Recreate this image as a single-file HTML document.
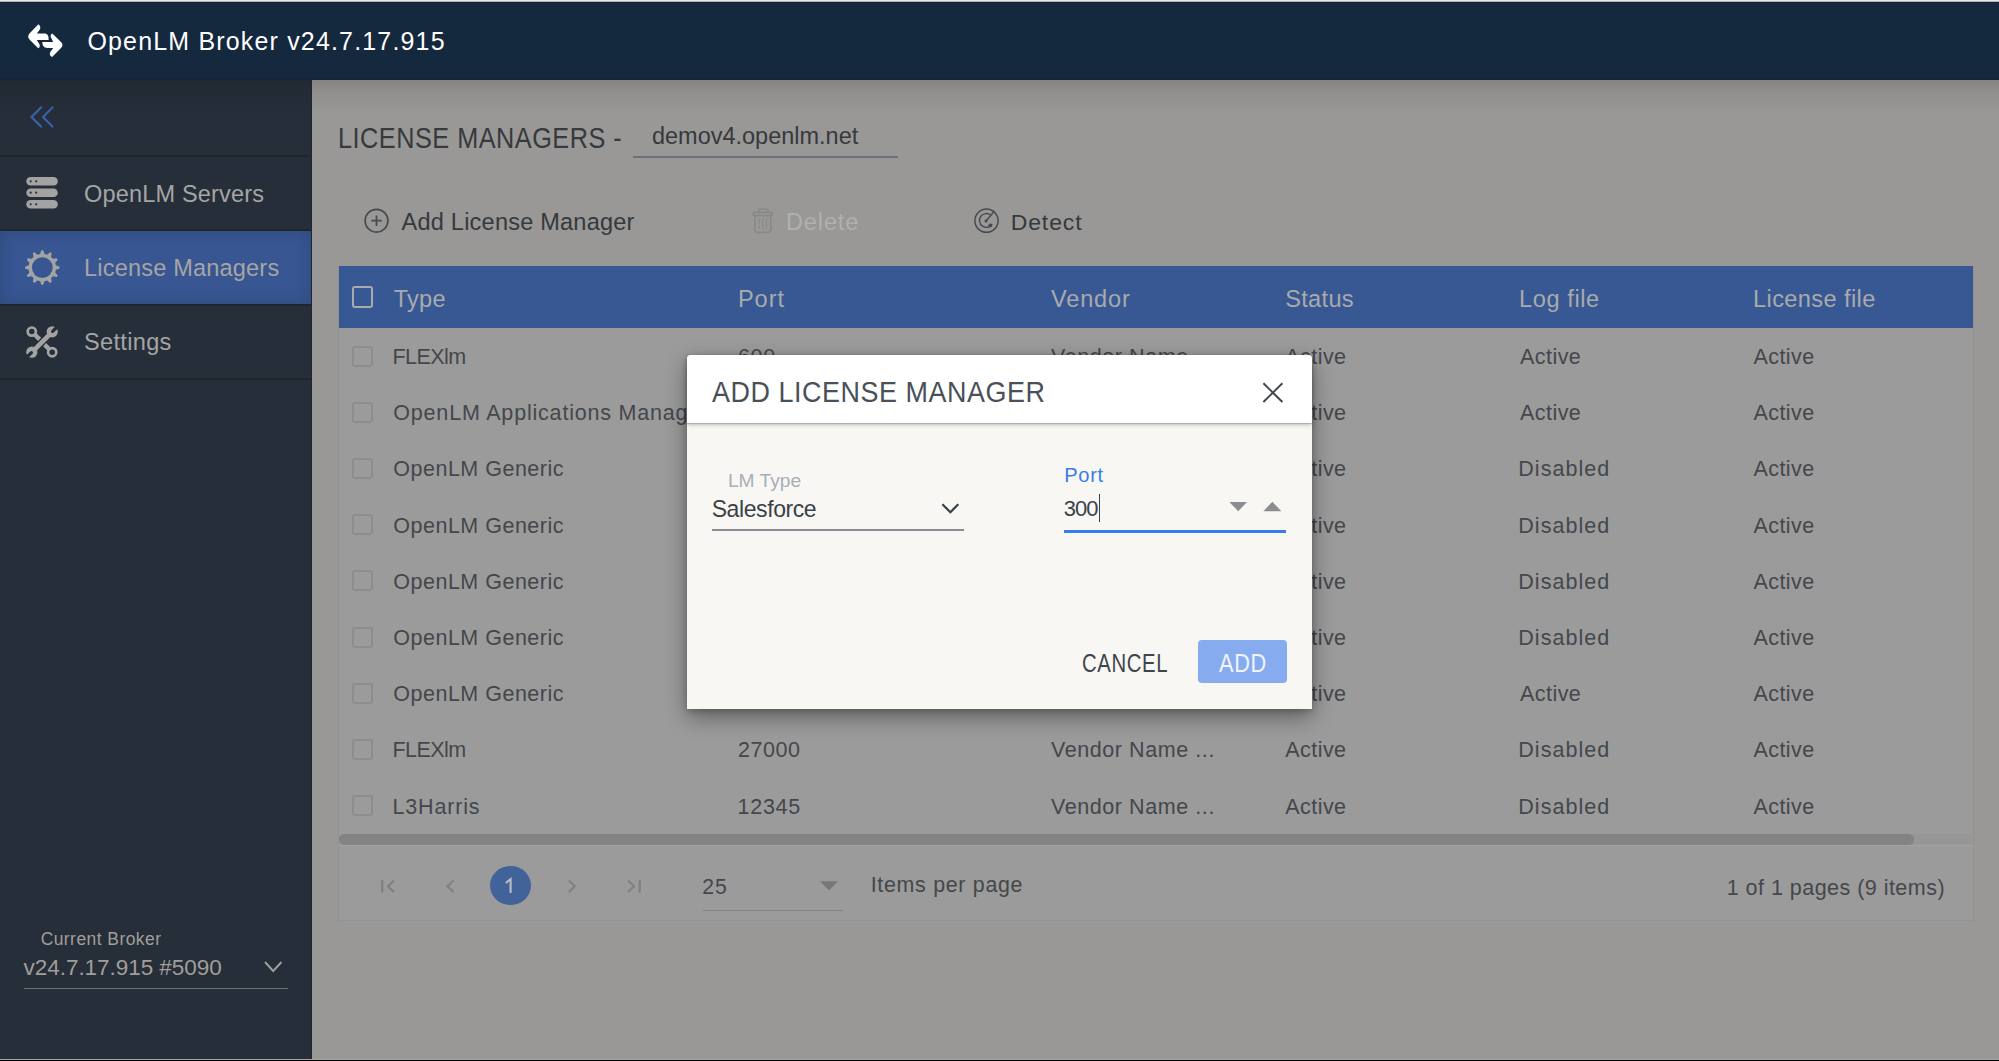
<!DOCTYPE html>
<html><head><meta charset="utf-8">
<style>
html,body{margin:0;padding:0;}
body{width:1999px;height:1061px;position:relative;overflow:hidden;background:#999896;font-family:"Liberation Sans", sans-serif;}
.t{position:absolute;white-space:nowrap;line-height:1;}
.a{position:absolute;}
svg{position:absolute;overflow:visible;}
</style></head><body>
<div class="a" style="left:0px;top:80px;width:312px;height:981px;background:#252e39;"></div>
<div class="a" style="left:0px;top:80px;width:1999px;height:36px;background:linear-gradient(rgba(0,0,0,0.13),rgba(0,0,0,0.05) 40%,rgba(0,0,0,0));"></div>
<div class="a" style="left:0px;top:0px;width:1999px;height:80px;background:#14283e;"></div>
<div class="a" style="left:0px;top:78px;width:1999px;height:2px;background:#12233a;"></div>
<div class="a" style="left:0px;top:0px;width:1999px;height:1px;background:#e7e7e5;"></div>
<div class="a" style="left:0px;top:1px;width:1999px;height:1px;background:#b4b7ba;"></div>
<div class="a" style="left:0px;top:2px;width:1999px;height:1px;background:#0f2136;"></div>
<div class="a" style="left:0px;top:155px;width:311px;height:2px;background:#20262d;"></div>
<div class="a" style="left:0px;top:229px;width:311px;height:2px;background:#20262d;"></div>
<div class="a" style="left:0px;top:231px;width:311px;height:73px;background:#375692;box-shadow:inset 0 0 16px rgba(0,0,0,0.16);"></div>
<div class="a" style="left:0px;top:304px;width:311px;height:2px;background:#20262d;"></div>
<div class="a" style="left:0px;top:378px;width:311px;height:2px;background:#20262d;"></div>
<div class="a" style="left:311px;top:80px;width:1px;height:981px;background:#1f262e;"></div>
<div class="a" style="left:0px;top:1059px;width:1999px;height:1px;background:#a3a29f;"></div>
<div class="a" style="left:0px;top:1060px;width:1999px;height:1px;background:#000;"></div>
<div class="t" style="left:87.45px;top:28.80px;font-size:24.97px;letter-spacing:1.182px;color:#ffffff;">OpenLM Broker v24.7.17.915</div>
<div class="t" style="left:84.00px;top:182.70px;font-size:23.56px;letter-spacing:0.154px;color:#a5a5a5;">OpenLM Servers</div>
<div class="t" style="left:84.00px;top:257.20px;font-size:23.56px;letter-spacing:0.183px;color:#a5a5a5;">License Managers</div>
<div class="t" style="left:84.00px;top:331.40px;font-size:23.56px;letter-spacing:0.321px;color:#a5a5a5;">Settings</div>
<div class="t" style="left:40.65px;top:931.00px;font-size:17.45px;letter-spacing:0.458px;color:#a29e98;">Current Broker</div>
<div class="t" style="left:23.60px;top:956.90px;font-size:22.51px;letter-spacing:-0.050px;color:#a29e99;">v24.7.17.915 #5090</div>
<div class="a" style="left:23.6px;top:987.6px;width:264px;height:1.6px;background:#72716f;"></div>
<div class="t" style="left:337.93px;top:124.00px;font-size:28.82px;letter-spacing:0.576px;color:#36393d;transform:scaleX(0.8766);transform-origin:0 0;">LICENSE MANAGERS -</div>
<div class="t" style="left:651.55px;top:124.40px;font-size:24.83px;letter-spacing:0.000px;color:#36393d;transform:scaleX(0.9457);transform-origin:0 0;">demov4.openlm.net</div>
<div class="a" style="left:633.3px;top:156px;width:264.5px;height:1.8px;background:#6c7077;"></div>
<div class="t" style="left:401.60px;top:210.60px;font-size:23.56px;letter-spacing:0.208px;color:#36393d;">Add License Manager</div>
<div class="t" style="left:786.00px;top:210.60px;font-size:23.56px;letter-spacing:0.850px;color:#b0b0b0;">Delete</div>
<div class="t" style="left:1010.75px;top:210.80px;font-size:22.98px;letter-spacing:0.880px;color:#36393d;">Detect</div>
<div class="a" style="left:338px;top:266px;width:1636px;height:655px;background:#9b9b9b;border-left:1px solid #929292;border-right:1px solid #929292;border-bottom:1px solid #929292;box-sizing:border-box;"></div>
<div class="a" style="left:339px;top:266px;width:1634px;height:62px;background:#385893;"></div>
<div class="t" style="left:393.80px;top:287.60px;font-size:23.56px;letter-spacing:0.233px;color:#a9aaab;">Type</div>
<div class="t" style="left:737.90px;top:287.60px;font-size:23.56px;letter-spacing:0.967px;color:#a9aaab;">Port</div>
<div class="t" style="left:1051.00px;top:287.60px;font-size:23.56px;letter-spacing:0.830px;color:#a9aaab;">Vendor</div>
<div class="t" style="left:1285.20px;top:287.60px;font-size:23.56px;letter-spacing:0.330px;color:#a9aaab;">Status</div>
<div class="t" style="left:1519.00px;top:287.60px;font-size:23.56px;letter-spacing:0.607px;color:#a9aaab;">Log file</div>
<div class="t" style="left:1753.00px;top:287.60px;font-size:23.56px;letter-spacing:0.409px;color:#a9aaab;">License file</div>
<div class="a" style="left:351.5px;top:286.2px;width:21.8px;height:21.5px;background:transparent;border:2px solid #a9aaab;border-radius:3px;box-sizing:border-box;"></div>
<div class="a" style="left:351.5px;top:345.5px;width:21.8px;height:21px;background:transparent;border:2px solid #8d8d8d;border-radius:3px;box-sizing:border-box;"></div>
<div class="t" style="left:392.55px;top:347.00px;font-size:21.53px;letter-spacing:-0.570px;color:#44474b;">FLEXlm</div>
<div class="t" style="left:738.00px;top:347.00px;font-size:21.53px;letter-spacing:0.625px;color:#44474b;">600</div>
<div class="t" style="left:1051.00px;top:347.00px;font-size:21.53px;letter-spacing:0.564px;color:#44474b;">Vendor Name ...</div>
<div class="t" style="left:1285.30px;top:347.00px;font-size:21.53px;letter-spacing:0.440px;color:#44474b;">Active</div>
<div class="t" style="left:1520.00px;top:347.00px;font-size:21.53px;letter-spacing:0.440px;color:#44474b;">Active</div>
<div class="t" style="left:1753.40px;top:347.00px;font-size:21.53px;letter-spacing:0.440px;color:#44474b;">Active</div>
<div class="a" style="left:351.5px;top:401.7px;width:21.8px;height:21px;background:transparent;border:2px solid #8d8d8d;border-radius:3px;box-sizing:border-box;"></div>
<div class="t" style="left:393.30px;top:403.20px;font-size:21.53px;letter-spacing:0.800px;color:#44474b;">OpenLM Applications Manager</div>
<div class="t" style="left:1285.30px;top:403.20px;font-size:21.53px;letter-spacing:0.440px;color:#44474b;">Active</div>
<div class="t" style="left:1520.00px;top:403.20px;font-size:21.53px;letter-spacing:0.440px;color:#44474b;">Active</div>
<div class="t" style="left:1753.40px;top:403.20px;font-size:21.53px;letter-spacing:0.440px;color:#44474b;">Active</div>
<div class="a" style="left:351.5px;top:457.9px;width:21.8px;height:21px;background:transparent;border:2px solid #8d8d8d;border-radius:3px;box-sizing:border-box;"></div>
<div class="t" style="left:393.30px;top:459.40px;font-size:21.53px;letter-spacing:0.488px;color:#44474b;">OpenLM Generic</div>
<div class="t" style="left:1285.30px;top:459.40px;font-size:21.53px;letter-spacing:0.440px;color:#44474b;">Active</div>
<div class="t" style="left:1518.25px;top:459.40px;font-size:21.53px;letter-spacing:1.029px;color:#44474b;">Disabled</div>
<div class="t" style="left:1753.40px;top:459.40px;font-size:21.53px;letter-spacing:0.440px;color:#44474b;">Active</div>
<div class="a" style="left:351.5px;top:514.1px;width:21.8px;height:21px;background:transparent;border:2px solid #8d8d8d;border-radius:3px;box-sizing:border-box;"></div>
<div class="t" style="left:393.30px;top:515.60px;font-size:21.53px;letter-spacing:0.488px;color:#44474b;">OpenLM Generic</div>
<div class="t" style="left:1285.30px;top:515.60px;font-size:21.53px;letter-spacing:0.440px;color:#44474b;">Active</div>
<div class="t" style="left:1518.25px;top:515.60px;font-size:21.53px;letter-spacing:1.029px;color:#44474b;">Disabled</div>
<div class="t" style="left:1753.40px;top:515.60px;font-size:21.53px;letter-spacing:0.440px;color:#44474b;">Active</div>
<div class="a" style="left:351.5px;top:570.3px;width:21.8px;height:21px;background:transparent;border:2px solid #8d8d8d;border-radius:3px;box-sizing:border-box;"></div>
<div class="t" style="left:393.30px;top:571.80px;font-size:21.53px;letter-spacing:0.488px;color:#44474b;">OpenLM Generic</div>
<div class="t" style="left:1285.30px;top:571.80px;font-size:21.53px;letter-spacing:0.440px;color:#44474b;">Active</div>
<div class="t" style="left:1518.25px;top:571.80px;font-size:21.53px;letter-spacing:1.029px;color:#44474b;">Disabled</div>
<div class="t" style="left:1753.40px;top:571.80px;font-size:21.53px;letter-spacing:0.440px;color:#44474b;">Active</div>
<div class="a" style="left:351.5px;top:626.5px;width:21.8px;height:21px;background:transparent;border:2px solid #8d8d8d;border-radius:3px;box-sizing:border-box;"></div>
<div class="t" style="left:393.30px;top:628.00px;font-size:21.53px;letter-spacing:0.488px;color:#44474b;">OpenLM Generic</div>
<div class="t" style="left:1285.30px;top:628.00px;font-size:21.53px;letter-spacing:0.440px;color:#44474b;">Active</div>
<div class="t" style="left:1518.25px;top:628.00px;font-size:21.53px;letter-spacing:1.029px;color:#44474b;">Disabled</div>
<div class="t" style="left:1753.40px;top:628.00px;font-size:21.53px;letter-spacing:0.440px;color:#44474b;">Active</div>
<div class="a" style="left:351.5px;top:682.7px;width:21.8px;height:21px;background:transparent;border:2px solid #8d8d8d;border-radius:3px;box-sizing:border-box;"></div>
<div class="t" style="left:393.30px;top:684.20px;font-size:21.53px;letter-spacing:0.488px;color:#44474b;">OpenLM Generic</div>
<div class="t" style="left:1285.30px;top:684.20px;font-size:21.53px;letter-spacing:0.440px;color:#44474b;">Active</div>
<div class="t" style="left:1520.00px;top:684.20px;font-size:21.53px;letter-spacing:0.440px;color:#44474b;">Active</div>
<div class="t" style="left:1753.40px;top:684.20px;font-size:21.53px;letter-spacing:0.440px;color:#44474b;">Active</div>
<div class="a" style="left:351.5px;top:738.9px;width:21.8px;height:21px;background:transparent;border:2px solid #8d8d8d;border-radius:3px;box-sizing:border-box;"></div>
<div class="t" style="left:392.55px;top:740.40px;font-size:21.53px;letter-spacing:-0.570px;color:#44474b;">FLEXlm</div>
<div class="t" style="left:738.00px;top:740.40px;font-size:21.53px;letter-spacing:0.550px;color:#44474b;">27000</div>
<div class="t" style="left:1051.00px;top:740.40px;font-size:21.53px;letter-spacing:0.564px;color:#44474b;">Vendor Name ...</div>
<div class="t" style="left:1285.30px;top:740.40px;font-size:21.53px;letter-spacing:0.440px;color:#44474b;">Active</div>
<div class="t" style="left:1518.25px;top:740.40px;font-size:21.53px;letter-spacing:1.029px;color:#44474b;">Disabled</div>
<div class="t" style="left:1753.40px;top:740.40px;font-size:21.53px;letter-spacing:0.440px;color:#44474b;">Active</div>
<div class="a" style="left:351.5px;top:795.1px;width:21.8px;height:21px;background:transparent;border:2px solid #8d8d8d;border-radius:3px;box-sizing:border-box;"></div>
<div class="t" style="left:392.55px;top:796.60px;font-size:21.53px;letter-spacing:0.807px;color:#44474b;">L3Harris</div>
<div class="t" style="left:737.50px;top:796.60px;font-size:21.53px;letter-spacing:0.738px;color:#44474b;">12345</div>
<div class="t" style="left:1051.00px;top:796.60px;font-size:21.53px;letter-spacing:0.564px;color:#44474b;">Vendor Name ...</div>
<div class="t" style="left:1285.30px;top:796.60px;font-size:21.53px;letter-spacing:0.440px;color:#44474b;">Active</div>
<div class="t" style="left:1518.25px;top:796.60px;font-size:21.53px;letter-spacing:1.029px;color:#44474b;">Disabled</div>
<div class="t" style="left:1753.40px;top:796.60px;font-size:21.53px;letter-spacing:0.440px;color:#44474b;">Active</div>
<div class="a" style="left:339px;top:834px;width:1634px;height:11px;background:#969696;border-radius:5.5px;"></div>
<div class="a" style="left:339px;top:845px;width:1634px;height:1px;background:#a3a3a3;"></div>
<div class="a" style="left:339.2px;top:834.2px;width:1575px;height:11px;background:#838383;border-radius:5.5px;"></div>
<div class="a" style="left:490.2px;top:865.6px;width:40.8px;height:39.6px;background:#42639a;border-radius:50%;"></div>
<svg style="left:0;top:0;" width="1999" height="1061" viewBox="0 0 1999 1061"><path d="M510.6,893 V879.2 L505.8,883" fill="none" stroke="#b9bdc4" stroke-width="2.1" stroke-linejoin="miter"/></svg>
<div class="t" style="left:702.20px;top:876.30px;font-size:21.22px;letter-spacing:1.050px;color:#44474b;">25</div>
<div class="a" style="left:703px;top:909.6px;width:140px;height:1.6px;background:#838383;"></div>
<div class="t" style="left:870.70px;top:874.90px;font-size:21.38px;letter-spacing:0.708px;color:#44474b;">Items per page</div>
<div class="t" style="left:1726.70px;top:877.80px;font-size:21.53px;letter-spacing:0.467px;color:#44474b;">1 of 1 pages (9 items)</div>
<svg style="left:0;top:0;" width="1999" height="1061" viewBox="0 0 1999 1061"><g fill="#ffffff" transform="translate(20,18)"><path d="M18.4,6.2 C20.5,7.5 21,10 19.5,12 L16.8,15.4 L24.5,15.4 C27.5,15.4 29,18 28.6,22 L16.8,22 L19,25.5 C20.3,27.8 20,29.5 18.2,30.3 L9.5,21.5 C7.8,19.7 7.8,17.6 9.5,15.6 Z"/><path d="M32.3,15.5 C30.5,16.3 30,18.2 31.4,20.2 L33.2,24 L22.4,24 C22.2,27.8 24,29.9 27.3,29.9 L33.2,29.9 L30.6,33.5 C29.2,35.6 29.6,38 32.1,39 L41,30 C43,28 43,26 41,24 Z"/></g></svg>
<svg style="left:0;top:0;" width="1999" height="1061" viewBox="0 0 1999 1061"><g fill="none" stroke="#3960a8" stroke-width="2.3" stroke-linecap="round" stroke-linejoin="round" transform="translate(28,104)"><path d="M13,3.5 L3.5,13 L13,22.5"/><path d="M24.5,3.5 L15,13 L24.5,22.5"/></g></svg>
<svg style="left:0;top:0;" width="1999" height="1061" viewBox="0 0 1999 1061"><rect x="26.3" y="177" width="31.5" height="8.6" rx="4.3" fill="#a3a3a3"/><circle cx="30.7" cy="181.3" r="1.1" fill="#2a313b"/><circle cx="36.2" cy="181.3" r="1.1" fill="#2a313b"/><rect x="26.3" y="188.4" width="31.5" height="8.6" rx="4.3" fill="#a3a3a3"/><circle cx="30.7" cy="192.70000000000002" r="1.1" fill="#2a313b"/><circle cx="36.2" cy="192.70000000000002" r="1.1" fill="#2a313b"/><rect x="26.3" y="200" width="31.5" height="8.6" rx="4.3" fill="#a3a3a3"/><circle cx="30.7" cy="204.3" r="1.1" fill="#2a313b"/><circle cx="36.2" cy="204.3" r="1.1" fill="#2a313b"/></svg>
<svg style="left:0;top:0;" width="1999" height="1061" viewBox="0 0 1999 1061"><path d="M40.07,253.98 L41.35,250.33 L43.25,250.33 L44.53,253.98 L47.18,254.69 L50.11,252.16 L51.76,253.12 L51.04,256.92 L52.98,258.86 L56.78,258.14 L57.74,259.79 L55.21,262.72 L55.92,265.37 L59.57,266.65 L59.57,268.55 L55.92,269.83 L55.21,272.48 L57.74,275.41 L56.78,277.06 L52.98,276.34 L51.04,278.28 L51.76,282.08 L50.11,283.04 L47.18,280.51 L44.53,281.22 L43.25,284.87 L41.35,284.87 L40.07,281.22 L37.42,280.51 L34.49,283.04 L32.84,282.08 L33.56,278.28 L31.62,276.34 L27.82,277.06 L26.86,275.41 L29.39,272.48 L28.68,269.83 L25.03,268.55 L25.03,266.65 L28.68,265.37 L29.39,262.72 L26.86,259.79 L27.82,258.14 L31.62,258.86 L33.56,256.92 L32.84,253.12 L34.49,252.16 L37.42,254.69 Z M52.70,267.60 A10.4,10.4 0 1,0 31.90,267.60 A10.4,10.4 0 1,0 52.70,267.60 Z" fill="#a3a3a3" fill-rule="evenodd"/></svg>
<svg style="left:0;top:0;" width="1999" height="1061" viewBox="0 0 1999 1061"><g stroke="#a3a3a3" fill="none"><path d="M34.2,334 L39.6,339.4" stroke-width="4.4"/><path d="M44.6,344.6 L50,350" stroke-width="4.4"/><circle cx="31.8" cy="331.6" r="4.1" stroke-width="2.7"/><circle cx="52.2" cy="352.2" r="4.1" stroke-width="2.7"/><path d="M34,350.2 L50,334.2" stroke-width="4.6"/></g><circle cx="52.2" cy="331.8" r="5.6" fill="#a3a3a3"/><circle cx="31.8" cy="352.2" r="5.6" fill="#a3a3a3"/><path d="M52.6,331.4 L58,326 M31.4,352.6 L26,358" stroke="#252e39" stroke-width="3.2" stroke-linecap="round"/></svg>
<svg style="left:0;top:0;" width="1999" height="1061" viewBox="0 0 1999 1061"><g fill="none" stroke="#464a4f" stroke-width="1.7"><circle cx="376.5" cy="220.7" r="11.4"/><path d="M371.2,220.7 H381.8 M376.5,215.4 V226"/></g></svg>
<svg style="left:0;top:0;" width="1999" height="1061" viewBox="0 0 1999 1061"><g fill="none" stroke="#878787" stroke-width="1.6" stroke-linejoin="round"><path d="M758.8,212.4 V210.6 Q758.8,209 760.4,209 H766 Q767.6,209 767.9,210.6 L768.3,212.4"/><rect x="753.2" y="212.4" width="19" height="3.2" rx="1.6"/><path d="M754.8,215.6 V229.5 Q754.8,232.4 757.7,232.4 H767.9 Q770.8,232.4 770.8,229.5 V215.6"/><path d="M759.2,218.5 V229 M762.8,218.5 V229 M766.4,218.5 V229" stroke-width="1"/></g></svg>
<svg style="left:0;top:0;" width="1999" height="1061" viewBox="0 0 1999 1061"><g fill="none" stroke="#464a4f"><circle cx="986.5" cy="220.7" r="11.6" stroke-width="1.5"/><path d="M990.6,215 A6.9,6.9 0 1,0 992.2,224.2" stroke-width="1.4"/><path d="M986,221 L994.5,211" stroke-width="1.4"/></g><circle cx="986" cy="221" r="1.5" fill="#464a4f"/><circle cx="990.3" cy="225.4" r="1.9" fill="#464a4f"/></svg>
<svg style="left:0;top:0;" width="1999" height="1061" viewBox="0 0 1999 1061"><g fill="none" stroke="#7f8183" stroke-width="2.2"><path d="M382.2,880 V892.6"/><path d="M394,880.5 L388,886.3 L394,892.1"/><path d="M453.5,880.5 L447.5,886.3 L453.5,892.1"/><path d="M568.8,880.5 L574.8,886.3 L568.8,892.1"/><path d="M628,880.5 L634,886.3 L628,892.1"/><path d="M639.7,880 V892.6"/></g><path d="M820,881.2 L837.9,881.2 L829,890.5 Z" fill="#777777"/></svg>
<svg style="left:0;top:0;" width="1999" height="1061" viewBox="0 0 1999 1061"><path d="M265,962 L273.2,971 L281.5,962" fill="none" stroke="#a29e98" stroke-width="1.9"/></svg>
<div class="a" style="left:687px;top:355px;width:625px;height:354px;background:#f8f7f4;border-radius:4px 4px 0 0;box-shadow:0 8px 22px rgba(0,0,0,0.38),0 2px 6px rgba(0,0,0,0.2);"></div>
<div class="a" style="left:687px;top:355px;width:625px;height:67.5px;background:#ffffff;border-radius:4px 4px 0 0;box-shadow:0 2px 4px rgba(0,0,0,0.22),0 1px 1px rgba(0,0,0,0.18);"></div>
<div class="t" style="left:712.00px;top:376.60px;font-size:29.53px;letter-spacing:0.591px;color:#4a5058;transform:scaleX(0.9123);transform-origin:0 0;">ADD LICENSE MANAGER</div>
<div class="t" style="left:727.90px;top:470.80px;font-size:19.20px;letter-spacing:0.008px;color:#a9aeb6;">LM Type</div>
<div class="t" style="left:711.70px;top:497.70px;font-size:23.03px;letter-spacing:-0.417px;color:#3c4148;">Salesforce</div>
<div class="a" style="left:712px;top:529px;width:252px;height:1.5px;background:#8b8d91;"></div>
<div class="t" style="left:1064.20px;top:464.80px;font-size:20.07px;letter-spacing:0.717px;color:#3a7ce8;">Port</div>
<div class="t" style="left:1063.75px;top:498.00px;font-size:21.94px;letter-spacing:-0.925px;color:#3c4148;">300</div>
<div class="a" style="left:1098.5px;top:494.3px;width:1.6px;height:27.6px;background:#3c4148;"></div>
<div class="a" style="left:1064px;top:530px;width:222.3px;height:3.2px;background:#3a7ce8;"></div>
<div class="t" style="left:1081.98px;top:651.40px;font-size:24.95px;letter-spacing:0.748px;color:#3f454c;transform:scaleX(0.8156);transform-origin:0 0;">CANCEL</div>
<div class="a" style="left:1198px;top:639.5px;width:88.5px;height:43.5px;background:#86acef;border-radius:4px;"></div>
<div class="t" style="left:1219.00px;top:651.40px;font-size:25.31px;letter-spacing:0.759px;color:#f0f4fb;transform:scaleX(0.8595);transform-origin:0 0;">ADD</div>
<svg style="left:0;top:0;" width="1999" height="1061" viewBox="0 0 1999 1061"><path d="M1263.4,383.3 L1282.4,402 M1282.4,383.3 L1263.4,402" fill="none" stroke="#3e444c" stroke-width="1.9"/><path d="M942.4,504.3 L950.35,512.2 L958.3,504.3" fill="none" stroke="#3a3f46" stroke-width="2.2"/><path d="M1229.3,501.9 L1247,501.9 L1238.2,511.2 Z M1263.4,511.2 L1281.3,511.2 L1272.4,501.7 Z" fill="#8b8d90"/></svg>
</body></html>
